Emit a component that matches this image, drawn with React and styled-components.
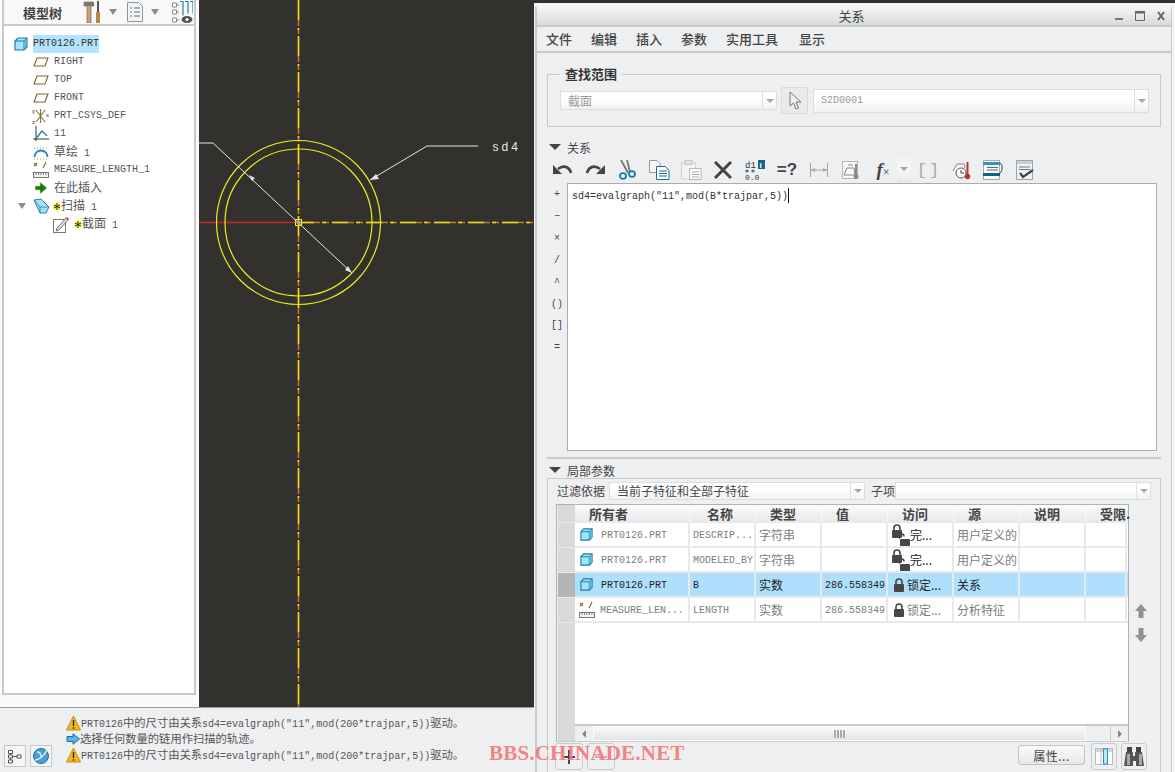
import React from 'react';
import styled, { createGlobalStyle } from 'styled-components';

const Global = createGlobalStyle`
  html, body { margin: 0; padding: 0; background: #eeeff1; }
  body { font-family: "Noto Sans CJK SC", "Liberation Sans", sans-serif; }
  * { box-sizing: border-box; }
`;

const Page = styled.div`
  position: relative;
  display: flex;
  width: 1175px;
  height: 772px;
  overflow: hidden;
  background: #eeeff1;
`;

const Main = styled.div`
  width: 534px;
  display: flex;
  flex-direction: column;
`;

const Top = styled.div`
  display: flex;
  height: 707px;
`;

const TreeColumn = styled.div`
  width: 199px;
  background: #fafafa;
  padding: 0 3px 12px 2px;
`;

const TreePanel = styled.div`
  height: 100%;
  background: #fff;
  border: 2px solid #c6cacc;
  border-top: none;
`;

const TreeHeader = styled.div`
  display: flex;
  align-items: center;
  height: 26px;
  padding-left: 19px;
  background: #f8f8f8;
  border-bottom: 2px solid #c6cacc;
`;

const TreeTitle = styled.div`
  width: 60px;
  font-size: 13px;
  font-weight: 700;
  color: #444;
`;

const HeadIcon = styled.span`
  display: flex;
  flex: none;
  margin-right: ${({ $gap }) => $gap || 0}px;
`;

const TreeBody = styled.div`
  padding-top: 9px;
`;

const TreeRow = styled.div`
  display: flex;
  align-items: center;
  height: 18px;
  padding-left: ${({ $indent }) => $indent}px;
`;

const IconSlot = styled.span`
  display: flex;
  justify-content: center;
  align-items: center;
  flex: none;
  width: ${({ $w }) => $w || 20}px;
  margin-right: ${({ $gap }) => $gap ?? 1}px;
`;

const Mono = styled.span`
  font-family: "Liberation Mono", "Noto Sans CJK SC", monospace;
  font-size: 10px;
  line-height: 12px;
  color: ${({ $color }) => $color || '#555'};
  white-space: nowrap;
`;

const CellMono = styled(Mono)`
  margin-top: 2px;
`;

const Han = styled.span`
  font-family: "Noto Sans CJK SC", sans-serif;
  font-size: 12px;
  line-height: 12px;
`;

const Picked = styled(Mono)`
  display: flex;
  align-items: center;
  height: 18px;
  padding: 0;
  background: #b3e3ff;
  color: #333;
`;

const Canvas = styled.div`
  flex: 1;
  background: #33312d;
  svg { display: block; }
`;

const MessageBar = styled.div`
  flex: 1;
  display: flex;
  border-top: 1px solid #9a9a9a;
  padding: 7px 0 0 4px;
`;

const SideTools = styled.div`
  display: flex;
  align-items: flex-end;
  gap: 4px;
  width: 62px;
  padding: 0 0 5px;
`;

const SideButton = styled.div`
  display: flex;
  align-items: center;
  justify-content: center;
  width: 22px;
  height: 22px;
  border: 1px solid #c6cacc;
  background: #f4f5f6;
`;

const Messages = styled.div`
  display: flex;
  flex-direction: column;
`;

const MessageLine = styled.div`
  display: flex;
  align-items: center;
  height: 16px;
  ${Han} { font-size: 11.3px; }
`;

const Dialog = styled.div`
  width: 641px;
  background: #f3f4f6;
  overflow: hidden;
  display: flex;
  flex-direction: column;
`;

const DarkStrip = styled.div`
  flex: none;
  height: 3px;
  background: #33312d;
`;

const Frame = styled.div`
  flex: 1;
  margin: 4px 3px 0 1px;
  border-left: 2px solid #c6cacc;
  border-right: 1px solid #c6cacc;
  background: #eeeff1;
  display: flex;
  flex-direction: column;
`;

const TitleBar = styled.div`
  position: relative;
  flex: none;
  height: 20px;
  display: flex;
  align-items: center;
  justify-content: center;
  background: linear-gradient(#f4f5f5, #d8dadc);
  border-bottom: 2px solid #c6cacc;
  font-size: 13px;
  color: #444;
  padding: 0 5px 1px 0;
`;

const WinButtons = styled.div`
  position: absolute;
  right: 6px;
  top: 3px;
  display: flex;
  align-items: center;
  gap: 12px;
`;

const MenuBar = styled.div`
  flex: none;
  display: flex;
  align-items: center;
  gap: 19px;
  height: 26px;
  padding: 0 0 2px 9px;
  border-bottom: 2px solid #c6cacc;
  font-size: 13px;
  font-weight: 500;
  color: #444;
  span:last-child { margin-left: 2px; }
`;

const Body = styled.div`
  flex: 1;
  padding: 21px 10px 0 10px;
  display: flex;
  flex-direction: column;
`;

const Group = styled.div`
  position: relative;
  flex: none;
  height: 53px;
  border: 1px solid #c6cacc;
  display: flex;
  align-items: center;
  padding-left: 12px;
`;

const Legend = styled.div`
  position: absolute;
  left: 12px;
  top: -9px;
  padding: 0 5px;
  background: #eeeff1;
  font-size: 13px;
  font-weight: 700;
  line-height: 16px;
  color: #333;
`;

const Combo = styled.div`
  display: flex;
  flex: none;
  width: ${({ $w }) => $w}px;
  height: ${({ $h }) => $h}px;
  border: 1px solid #dcdee0;
  background: linear-gradient(#fff 40%, #f0f1f2);
  font-size: 12px;
  color: ${({ $color }) => $color || '#9a9a9a'};
`;

const ComboText = styled.div`
  flex: 1;
  display: flex;
  align-items: center;
  padding: 0 0 1px ${({ $pad }) => $pad ?? 7}px;
`;

const ComboCaret = styled.div`
  display: flex;
  align-items: center;
  justify-content: center;
  width: ${({ $w }) => $w || 14}px;
  border-left: 1px solid #dcdee0;
  &::after {
    content: '';
    border-left: 4px solid transparent;
    border-right: 4px solid transparent;
    border-top: 4px solid #a4a6a8;
  }
`;

const PickButton = styled.div`
  flex: none;
  display: flex;
  align-items: center;
  justify-content: center;
  width: 27px;
  height: 27px;
  margin: 0 5px 0 4px;
  border: 1px solid #d8dadc;
  border-radius: 2px;
  background: #e9eaec;
`;

const SectionHead = styled.div`
  flex: none;
  display: flex;
  align-items: center;
  gap: 6px;
  height: 16px;
  margin-top: ${({ $top }) => $top}px;
  padding-left: 2px;
  font-size: 12px;
  color: #444;
  &::before {
    content: '';
    border-left: 6px solid transparent;
    border-right: 6px solid transparent;
    border-top: 6px solid #444;
  }
`;

const ToolBar = styled.div`
  flex: none;
  display: flex;
  align-items: center;
  height: 26px;
  margin-top: 2px;
`;

const Tool = styled.div`
  display: flex;
  align-items: center;
  justify-content: center;
  width: 32px;
  height: 26px;
`;

const ToolCaret = styled(ComboCaret)`
  align-self: flex-end;
  width: 14px;
  height: 28px;
  margin: 0 2px 0 -2px;
  border: none;
  background: linear-gradient(#eeeff1, #f9f9fa 50%, #e4e5e7);
`;

const ToolGlyph = styled.span`
  font-family: "Liberation Sans", sans-serif;
  font-size: 17px;
  font-weight: 700;
  color: #444;
`;

const FxGlyph = styled.span`
  font-family: "Liberation Serif", serif;
  font-style: italic;
  font-size: 19px;
  font-weight: 700;
  color: #444;
  span { font-size: 12px; font-style: normal; font-weight: 400; }
`;

const BracketGlyph = styled.span`
  font-family: "Liberation Mono", monospace;
  font-size: 17px;
  letter-spacing: 2px;
  color: #a8aaac;
`;

const EditorRow = styled.div`
  flex: none;
  display: flex;
  height: 268px;
`;

const SymbolColumn = styled.div`
  flex: none;
  width: 20px;
  margin-top: 1px;
  display: flex;
  flex-direction: column;
`;

const SymbolKey = styled.div`
  height: 21.85px;
  display: flex;
  align-items: center;
  justify-content: center;
  font-family: "Liberation Mono", monospace;
  font-size: 10px;
  color: #444;
`;

const Editor = styled.div`
  width: 590px;
  height: 268px;
  background: #fff;
  border: 1px solid #a9abad;
  padding: 3px 4px;
  font-size: 10px;
  line-height: 16px;
`;

const Cursor = styled.span`
  display: inline-block;
  width: 1px;
  height: 15px;
  background: #111;
  vertical-align: -4px;
`;

const Rule = styled.div`
  flex: none;
  height: 2px;
  margin-top: 6px;
  background: #c6cacc;
`;

const ParamBox = styled.div`
  flex: none;
  height: 300px;
  border: 1px solid #c6cacc;
  padding: 3px 0 0 8px;
`;

const FilterRow = styled.div`
  display: flex;
  align-items: center;
  height: 18px;
  margin-bottom: 4px;
  font-size: 12px;
  color: #444;
`;

const FilterLabel = styled.div`
  flex: none;
  width: ${({ $w }) => $w}px;
  padding: 0 0 1px ${({ $pad }) => $pad}px;
`;

const TableRow = styled.div`
  display: flex;
`;

const Table = styled.div`
  width: 573px;
  height: 238px;
  border: 1px solid #b0b3b5;
  border-bottom-color: #c6cacc;
  display: flex;
  background: #fff;
`;

const Gutter = styled.div`
  flex: none;
  width: 18px;
  background: #d9d9d9;
  border-left: 1px solid #eeeff1;
`;

const GutterCell = styled.div`
  height: ${({ $h }) => $h}px;
  background: ${({ $on }) => ($on ? '#b5b5b5' : 'transparent')};
  border-bottom: 1px solid #e9eaeb;
`;

const TableMain = styled.div`
  flex: 1;
  min-width: 0;
  display: flex;
  flex-direction: column;
`;

const HeadRow = styled.div`
  flex: none;
  display: flex;
  height: 18px;
  background: linear-gradient(#fbfbfb, #e6e7e9);
`;

const HeadCell = styled.div`
  flex: none;
  width: ${({ $w }) => $w}px;
  padding-left: ${({ $pad }) => $pad ?? 14}px;
  white-space: nowrap;
  border-right: 1px solid #f8f8f8;
  font-size: 13px;
  line-height: 18px;
  font-weight: 700;
  color: #444;
`;

const DataRow = styled.div`
  flex: none;
  display: flex;
  height: 25px;
  background: ${({ $on }) => ($on ? '#aee0fd' : '#fff')};
  border-bottom: 2px solid #e8e9ea;
`;

const DataCell = styled.div`
  flex: none;
  display: flex;
  align-items: center;
  width: ${({ $w }) => $w}px;
  padding-left: ${({ $pad }) => $pad ?? 3}px;
  overflow: hidden;
  white-space: nowrap;
  border-right: 2px solid #e8e9ea;
  font-size: 12px;
  color: ${({ $on }) => ($on ? '#222' : '#7d7d7d')};
`;

const Spacer = styled.div`
  flex: 1;
`;

const ScrollBar = styled.div`
  flex: none;
  display: flex;
  height: 17px;
  border-top: 2px solid #c6cacc;
  background: #eeeff1;
`;

const ScrollEnd = styled.div`
  flex: none;
  display: flex;
  align-items: center;
  justify-content: center;
  width: ${({ $w }) => $w}px;
  background: #eeeff1;
  &::after {
    content: '';
    border-top: 4px solid transparent;
    border-bottom: 4px solid transparent;
    ${({ $dir }) => ($dir === 'left' ? 'border-right: 4px solid #888;' : 'border-left: 4px solid #888;')}
  }
`;

const ScrollThumb = styled.div`
  flex: none;
  width: 493px;
  margin: 0 1px;
  display: flex;
  align-items: center;
  justify-content: center;
  gap: 1px;
  border: 1px solid #fff;
  background: linear-gradient(#fafafa, #e3e4e6);
  i { width: 2px; height: 8px; background: #aaa; }
`;

const ScrollGap = styled.div`
  flex: 1;
  border-right: 1px solid #c6cacc;
`;

const ArrowColumn = styled.div`
  flex: none;
  width: 25px;
  padding: 100px 0 0 6px;
  display: flex;
  flex-direction: column;
  gap: 10px;
`;

const BottomRow = styled.div`
  display: flex;
  align-items: flex-start;
  margin: 1px 0 0 -1px;
`;

const SquareButton = styled.div`
  flex: none;
  display: flex;
  align-items: center;
  justify-content: center;
  width: ${({ $w }) => $w || 28}px;
  height: 27px;
  margin-right: 4px;
  border: 1px solid #c8cacc;
  border-radius: 3px;
  background: #eeeff1;
`;

const TextButton = styled.div`
  flex: none;
  width: 67px;
  height: 20px;
  margin: 2px 6px 0 399px;
  display: flex;
  align-items: center;
  justify-content: center;
  border: 1px solid #c0c2c4;
  border-radius: 3px;
  background: linear-gradient(#fbfbfb, #e6e7e9);
  font-size: 12px;
  color: #444;
  letter-spacing: 0.5px;
`;

const Watermark = styled.div`
  position: absolute;
  left: 489px;
  top: 740px;
  font-family: "Liberation Serif", serif;
  font-size: 21px;
  font-weight: 700;
  line-height: 26px;
  letter-spacing: 0.2px;
  color: #f7797d;
  white-space: nowrap;
  opacity: 0.92;
`;

/* tree and table icons */
const PartIcon = ({ size = 14 }) => (
  <svg width={size} height={size} viewBox="0 0 14 14">
    <path d="M1 4 4 1h9v9l-3 3H1z" fill="#a5e3f8" stroke="#1b7ca6" strokeWidth="1.2" />
    <path d="M1 4h9v9M10 4l3-3" fill="none" stroke="#1b7ca6" strokeWidth="1" />
    <path d="M10 4.500l2.500-2.500v7.500L10 12z" fill="#5fb8da" />
  </svg>
);

const PlaneIcon = () => (
  <svg width="16" height="10" viewBox="0 0 16 10">
    <path d="M4 1h11l-3 8H1z" fill="none" stroke="#7c6331" strokeWidth="1.1" />
  </svg>
);

const CsysIcon = () => (
  <svg width="18" height="18" viewBox="0 0 18 18">
    <path d="M4 3l9 12M13 3 4 15M8.500 2v14" stroke="#8a7240" strokeWidth="1.1" fill="none" />
    <text x="0" y="6" fontSize="6" fontFamily="Liberation Sans" fill="#333">y</text>
    <text x="0" y="17" fontSize="6" fontFamily="Liberation Sans" fill="#333">z</text>
    <text x="14" y="10" fontSize="6" fontFamily="Liberation Sans" fill="#333">x</text>
  </svg>
);

const GraphIcon = () => (
  <svg width="16" height="16" viewBox="0 0 16 16">
    <path d="M3 0v15M0 13h16" stroke="#333" strokeWidth="1" fill="none" />
    <path d="M3.500 12 9 5l5 5" stroke="#2a7fa8" strokeWidth="1.4" fill="none" />
  </svg>
);

const SketchIcon = () => (
  <svg width="16" height="16" viewBox="0 0 16 16">
    <path d="M1.500 13a6.500 6.500 0 0 1 13 0" stroke="#2a86b4" strokeWidth="1.8" fill="none" />
    <path d="M1 4h14M1 15h14" stroke="#777" strokeWidth="0.8" strokeDasharray="1 2" fill="none" />
  </svg>
);

const MeasureIcon = () => (
  <svg width="16" height="18" viewBox="0 0 16 18">
    <path d="M1 2l3 3M4 2 1 5M13 1l-3 6" stroke="#8a6d3b" strokeWidth="1.2" fill="none" />
    <rect x="0.500" y="11.500" width="15" height="5" fill="#f4f4f4" stroke="#777" />
    <path d="M3 12v2M5.500 12v2M8 12v2M10.500 12v2M13 12v2" stroke="#666" strokeWidth="0.8" />
  </svg>
);

const InsertIcon = () => (
  <svg width="12" height="12" viewBox="0 0 12 12">
    <path d="M0 4h5V0l7 6-7 6V8H0z" fill="#0d7a1d" stroke="#e3e36a" strokeWidth="0.6" />
  </svg>
);

const SweepIcon = () => (
  <svg width="17" height="16" viewBox="0 0 17 16">
    <path d="M1 2l7-1 8 8-3 6H7z" fill="#a7dcf2" stroke="#2a7fa8" strokeWidth="1" />
    <path d="M1 2l6 7 9 0M7 9v6" stroke="#2a7fa8" strokeWidth="0.8" fill="none" />
  </svg>
);

const PencilIcon = () => (
  <svg width="17" height="17" viewBox="0 0 17 17">
    <rect x="0.500" y="3.500" width="12" height="13" fill="#fff" stroke="#777" />
    <path d="M4 12 13 2l2 2-9 10-3 1z" fill="#ddd" stroke="#555" strokeWidth="0.8" />
    <path d="M13 2l1-1 2 2-1 1z" fill="#c33" />
  </svg>
);

const StarMark = () => (
  <svg width="8" height="9" viewBox="0 0 8 9">
    <circle cx="4" cy="4.500" r="3.800" fill="#ffff30" />
    <path d="M4 1v7M1 3l6 3M7 3 1 6" stroke="#222" strokeWidth="1" />
  </svg>
);

const TriangleDown = ({ color = '#8c8c8c' }) => (
  <svg width="8" height="6" viewBox="0 0 8 6">
    <path d="M0 0h8L4 6z" fill={color} />
  </svg>
);

const HammerIcon = () => (
  <svg width="18" height="22" viewBox="0 0 18 22">
    <path d="M1 1h9l1 4H8v17H4V5H1z" fill="#c8a468" stroke="#6e5630" strokeWidth="0.6" />
    <path d="M1 1h10v4H1z" fill="#777" />
    <path d="M14 0h2v11h-2z" fill="#555" />
    <path d="M13 11h4v11h-4z" fill="#b58a48" />
  </svg>
);

const ListDocIcon = () => (
  <svg width="16" height="20" viewBox="0 0 16 20">
    <path d="M.5.5h11l4 4v15H.5z" fill="#f2f4f5" stroke="#8e9498" />
    <path d="M7 6h6M7 10h6M7 14h6" stroke="#666" strokeWidth="1" />
    <path d="M3 6h2M3 10h2M3 14h2" stroke="#2a86b4" strokeWidth="1.2" />
  </svg>
);

const TreeEyeIcon = () => (
  <svg width="21" height="23" viewBox="0 0 21 23">
    <path d="M.5 2h4v4h-4zM.5 9h4v4h-4zM.5 17h4v4h-4z" fill="#fff" stroke="#888" />
    <path d="M4 4h3M4 11h3M4 19h3" stroke="#888" />
    <path d="M8 .5h3v14M13 .5h3v12M18 .5h3v12" stroke="#2a7fa8" strokeWidth="1.2" fill="none" />
    <ellipse cx="15" cy="18.500" rx="5.500" ry="3.500" fill="#555" />
    <circle cx="15" cy="18.500" r="1.500" fill="#fff" />
  </svg>
);

const WarnIcon = () => (
  <svg width="15" height="16" viewBox="0 0 15 16">
    <path d="M7.500 1 14.500 15H.5z" fill="#f5b90f" stroke="#b37a05" strokeWidth="0.8" />
    <path d="M7.500 5v6M7.500 12.200v1.600" stroke="#222" strokeWidth="1.400" />
  </svg>
);

const BlueArrowIcon = () => (
  <svg width="14" height="12" viewBox="0 0 14 12">
    <path d="M1 3.500h6V.8L13.500 6 7 11.200V8.500H1z" fill="#52b7e6" stroke="#14678f" strokeWidth="0.9" />
  </svg>
);

const OrgIcon = () => (
  <svg width="14" height="15" viewBox="0 0 14 15">
    <path d="M.5 1.500h4v3h-4zM.5 6h4v3h-4zM.5 11h4v3h-4zM9 6h4v3H9z" fill="#fff" stroke="#555" />
    <path d="M2.500 4.500v1.500M2.500 9v2M4.500 7.500H9" stroke="#555" />
  </svg>
);

const GlobeIcon = () => (
  <svg width="18" height="18" viewBox="0 0 18 18">
    <circle cx="9" cy="9" r="7.500" fill="#4a9fd0" stroke="#1b6f9c" />
    <path d="M3 13c4 0 9-4 12-10M5 5c3 0 4 2 4 5" stroke="#dff3fb" strokeWidth="1.400" fill="none" />
  </svg>
);

const CursorIcon = () => (
  <svg width="14" height="20" viewBox="0 0 14 20">
    <path d="M2 1v14l3.500-3 2.500 6 2.500-1-2.500-6H13z" fill="#eee" stroke="#777" />
  </svg>
);

/* dialog toolbar icons */
const UndoIcon = () => (
  <svg width="20" height="14" viewBox="0 0 20 14">
    <path d="M5 6c5-4 11-3 13 4" fill="none" stroke="#444" strokeWidth="2.600" />
    <path d="M0 2v9h9z" fill="#444" />
  </svg>
);

const RedoIcon = () => (
  <svg width="20" height="14" viewBox="0 0 20 14">
    <path d="M15 6C10 2 4 3 2 10" fill="none" stroke="#444" strokeWidth="2.600" />
    <path d="M20 2v9h-9z" fill="#444" />
  </svg>
);

const CutIcon = () => (
  <svg width="17" height="20" viewBox="0 0 17 20">
    <path d="M2 0l7 13M8 0l2 8 1 4" stroke="#777" strokeWidth="1.800" fill="none" />
    <ellipse cx="4" cy="16" rx="3" ry="2.800" fill="none" stroke="#157cab" strokeWidth="1.800" />
    <ellipse cx="13" cy="14" rx="3" ry="2.800" fill="none" stroke="#157cab" strokeWidth="1.800" />
  </svg>
);

const CopyIcon = () => (
  <svg width="21" height="20" viewBox="0 0 21 20">
    <path d="M.5.5H8l3 3v9H.5z" fill="#f7f7f7" stroke="#999" />
    <path d="M7.500 6.500H16l4 3.500v9.500H7.500z" fill="#fff" stroke="#1a6c94" />
    <path d="M10 11h8M10 13.500h8M10 16h8" stroke="#1a6c94" />
  </svg>
);

const PasteIcon = () => (
  <svg width="21" height="20" viewBox="0 0 21 20">
    <rect x="0.500" y="3" width="14" height="16" fill="#f2f3f4" stroke="#cfd0d2" />
    <rect x="4" y="0.500" width="7" height="4" fill="#e2e3e4" stroke="#c4c5c7" />
    <path d="M8.500 8.500H20v11H8.500z" fill="#fff" stroke="#b5b6b8" />
    <path d="M11 12h7M11 14.500h7M11 17h7" stroke="#a8a9ab" />
  </svg>
);

const CrossIcon = () => (
  <svg width="18" height="18" viewBox="0 0 18 18">
    <path d="M1 1l16 16M17 1 1 17" stroke="#444" strokeWidth="3" />
  </svg>
);

const DecimalIcon = () => (
  <svg width="21" height="20" viewBox="0 0 21 20">
    <text x="0" y="8" fontSize="9" fontFamily="Liberation Mono" fill="#333">d1</text>
    <rect x="13" y="0" width="7" height="9" fill="#1a6488" />
    <text x="14.500" y="7.500" fontSize="8" fontWeight="700" fontFamily="Liberation Sans" fill="#fff">i</text>
    <path d="M0 11h4M2 9.500v3M6 11h4M8 9.500v3" stroke="#1a6488" strokeWidth="1.200" />
    <text x="0" y="19.500" fontSize="8" fontFamily="Liberation Mono" fill="#333">0.0</text>
  </svg>
);

const DimIcon = () => (
  <svg width="18" height="14" viewBox="0 0 18 14">
    <path d="M.5 0v14M17.500 0v14M1 7h16" stroke="#a5a7a9" fill="none" />
    <path d="M1 7l4-2v4zM17 7l-4-2v4z" fill="#a5a7a9" />
  </svg>
);

const MeasureDocIcon = () => (
  <svg width="18" height="19" viewBox="0 0 18 19">
    <rect x="0.500" y="0.500" width="15" height="17" fill="#f8f8f8" stroke="#b3b5b7" />
    <path d="M2 14l3-7h7l1 7zM6 4h5" fill="none" stroke="#888" />
    <path d="M14 3v11" stroke="#888" strokeWidth="2" />
    <circle cx="14" cy="15.500" r="2.500" fill="#888" />
  </svg>
);

const ThermoIcon = () => (
  <svg width="19" height="19" viewBox="0 0 19 19">
    <path d="M1 10l4-7h7l1 4" fill="#f4f4f4" stroke="#888" />
    <circle cx="9" cy="12" r="5" fill="#fff" stroke="#555" />
    <path d="M9 9v3h3" stroke="#333" fill="none" />
    <path d="M15.500 1v13" stroke="#b5362e" strokeWidth="2" />
    <circle cx="15.500" cy="15.500" r="2.700" fill="#b5362e" />
  </svg>
);

const ListSwapIcon = () => (
  <svg width="21" height="20" viewBox="0 0 21 20">
    <rect x="0.500" y="0.500" width="16" height="19" fill="#f8f8f8" stroke="#aaa" />
    <path d="M0 2h17v3H0z" fill="#2796c9" />
    <path d="M0 13h17v3H0z" fill="#125f86" />
    <path d="M4 7.500h11M4 10h11" stroke="#666" />
    <path d="M17 3c3 1 3 9-1 11" stroke="#444" fill="none" />
  </svg>
);

const CheckDocIcon = () => (
  <svg width="18" height="20" viewBox="0 0 18 20">
    <rect x="0.500" y="0.500" width="16" height="19" fill="#f1f2f3" stroke="#9ba5ab" />
    <path d="M1 1h15v3H1z" fill="#c4d2da" />
    <path d="M3 7h11M3 9.500h11" stroke="#777" />
    <path d="M4 13l3 4 10-7" fill="none" stroke="#444" strokeWidth="2.200" />
  </svg>
);

const LockIcon = ({ open }) => (
  <svg width="12" height="14" viewBox="0 0 12 14">
    <path
      d={open ? 'M1 6V3.500a2.500 2.500 0 0 1 5 0' : 'M3 6V4a3 3 0 0 1 6 0v2'}
      fill="none"
      stroke="#444"
      strokeWidth="1.600"
      transform={open ? 'translate(-1 0)' : undefined}
    />
    <rect x="1" y="6" width="10" height="8" rx="1" fill="#474747" />
  </svg>
);

const UpArrowIcon = () => (
  <svg width="12" height="14" viewBox="0 0 12 14">
    <path d="M6 0l6 7H8.500v7h-5V7H0z" fill="#8f9193" />
  </svg>
);

const DownArrowIcon = () => (
  <svg width="12" height="14" viewBox="0 0 12 14">
    <path d="M6 14l6-7H8.500V0h-5v7H0z" fill="#8f9193" />
  </svg>
);

const ColumnsIcon = () => (
  <svg width="18" height="17" viewBox="0 0 18 17">
    <rect x="0.500" y="0.500" width="17" height="16" fill="#fff" stroke="#bbb" />
    <path d="M1 1h16v3H1z" fill="#d7d8da" />
    <path d="M6 1v15M12 1v15" stroke="#bbb" />
    <rect x="8.500" y="1" width="4" height="15" fill="#bfe6f7" stroke="#1e93c6" />
  </svg>
);

const BinocularsIcon = () => (
  <svg width="20" height="22" viewBox="0 0 20 22">
    <path d="M3 1h5v5H3zM12 1h5v5h-5z" fill="#444" />
    <path d="M2 6h7v4h2V6h7l2 14h-8v-5H9v5H0z" fill="#555" />
    <path d="M3 8h3v11H3zM15 8h3v11h-3z" fill="#a8a8a8" />
  </svg>
);

const PlusIcon = () => (
  <svg width="12" height="14" viewBox="0 0 12 14">
    <path d="M5 0h2v6h5v2H7v6H5V8H0V6h5z" fill="#444" />
  </svg>
);

const MinusIcon = () => (
  <svg width="12" height="14" viewBox="0 0 12 14">
    <path d="M0 6h12v2H0z" fill="#b5b5b5" />
  </svg>
);

const DrawingView = () => (
  <svg width="335" height="707" viewBox="199 0 335 707">
    <line x1="298.500" y1="0" x2="298.500" y2="707" stroke="#c87a20" strokeWidth="1.500" strokeDasharray="26 2 6 2" />
    <line x1="298.500" y1="0" x2="298.500" y2="707" stroke="#e6e01e" strokeWidth="1.500" strokeDasharray="20 8 2 6" />
    <line x1="199" y1="222.500" x2="298" y2="222.500" stroke="#c9252f" strokeWidth="1.500" />
    <line x1="298" y1="222.500" x2="534" y2="222.500" stroke="#c87a20" strokeWidth="1.500" strokeDasharray="22 3 6 3" />
    <line x1="298" y1="222.500" x2="534" y2="222.500" stroke="#dfdc24" strokeWidth="1.500" strokeDasharray="16 8 4 6" />
    <circle cx="298.500" cy="222.500" r="82" fill="none" stroke="#ecec1c" strokeWidth="1.200" />
    <circle cx="298.500" cy="222.500" r="73.500" fill="none" stroke="#ecec1c" strokeWidth="1.200" />
    <path d="M199 143h14l138.500 129.500" fill="none" stroke="#e6e6e6" strokeWidth="1" />
    <path d="M370 180 427 146h51" fill="none" stroke="#e6e6e6" strokeWidth="1" />
    <path d="M249 175l6 3-3 3z" fill="#e6e6e6" />
    <path d="M352 273l-7-3 3-4z" fill="#e6e6e6" />
    <path d="M370 180l6-6 3 5z" fill="#e6e6e6" />
    <rect x="295.500" y="219.500" width="6" height="6" fill="none" stroke="#ecec1c" />
    <circle cx="298.500" cy="222.500" r="2" fill="#9aa7c8" />
    <text x="492.500" y="150.500" fontFamily="Liberation Sans" fontSize="12" letterSpacing="3" fill="#e8e8e8">sd4</text>
  </svg>
);

const treeRows = [
  { label: 'RIGHT', icon: <PlaneIcon /> },
  { label: 'TOP', icon: <PlaneIcon /> },
  { label: 'FRONT', icon: <PlaneIcon /> },
  { label: 'PRT_CSYS_DEF', icon: <CsysIcon /> },
  { label: '11', icon: <GraphIcon /> },
  { label: <><Han>草绘</Han> 1</>, icon: <SketchIcon /> },
  { label: 'MEASURE_LENGTH_1', icon: <MeasureIcon /> },
  { label: <Han>在此插入</Han>, icon: <InsertIcon /> },
];

const tools = [
  <UndoIcon />, <RedoIcon />, <CutIcon />, <CopyIcon />, <PasteIcon />, <CrossIcon />,
  <DecimalIcon />, <ToolGlyph>=?</ToolGlyph>, <DimIcon />, <MeasureDocIcon />,
];

const symbols = ['+', '−', '×', '/', '^', '()', '[]', '='];

const columns = [
  { name: '所有者', w: 115 },
  { name: '名称', w: 66, pad: 17 },
  { name: '类型', w: 66 },
  { name: '值', w: 66 },
  { name: '访问', w: 66 },
  { name: '源', w: 66 },
  { name: '说明', w: 66 },
  { name: '受限.', w: 41 },
];

const params = [
  { icon: <PartIcon size={13} />, owner: 'PRT0126.PRT', name: 'DESCRIP...', type: '字符串', value: '', access: '完...', twoLocks: true, source: '用户定义的' },
  { icon: <PartIcon size={13} />, owner: 'PRT0126.PRT', name: 'MODELED_BY', type: '字符串', value: '', access: '完...', twoLocks: true, source: '用户定义的' },
  { icon: <PartIcon size={13} />, owner: 'PRT0126.PRT', name: 'B', type: '实数', value: '286.558349', access: '锁定...', source: '关系', on: true },
  { icon: <MeasureIcon />, owner: 'MEASURE_LEN...', name: 'LENGTH', type: '实数', value: '286.558349', access: '锁定...', source: '分析特征', measure: true },
];

const warning = <>PRT0126<Han>中的尺寸由关系</Han>sd4=evalgraph("11",mod(200*trajpar,5))<Han>驱动。</Han></>;

const LockPair = styled.span`
  position: relative;
  flex: none;
  width: 19px;
  height: 24px;
  svg { position: absolute; left: 0; top: 1px; }
  svg + svg { left: 8px; top: 10px; }
`;

const LockSlot = styled.span`
  flex: none;
  display: flex;
  margin: 0 2px 0 3px;
`;

const ParamRow = ({ row }) => (
  <DataRow $on={row.on}>
    <DataCell $w={115} $pad={row.measure ? 4 : 5} $on={row.on}>
      <IconSlot $w={row.measure ? 16 : 13} $gap={row.measure ? 5 : 8}>{row.icon}</IconSlot>
      <CellMono $color={row.on ? '#222' : '#7d7d7d'}>{row.owner}</CellMono>
    </DataCell>
    <DataCell $w={66} $on={row.on}><CellMono $color={row.on ? '#222' : '#7d7d7d'}>{row.name}</CellMono></DataCell>
    <DataCell $w={66} $on={row.on}>{row.type}</DataCell>
    <DataCell $w={66} $on={row.on}><CellMono $color={row.on ? '#222' : '#7d7d7d'}>{row.value}</CellMono></DataCell>
    <DataCell $w={66} $pad={row.twoLocks ? 3 : 2} $on={row.twoLocks || row.on}>
      {row.twoLocks
        ? <LockPair><LockIcon open={false} /><LockIcon open /></LockPair>
        : <LockSlot><LockIcon /></LockSlot>}
      {row.access}
    </DataCell>
    <DataCell $w={66} $on={row.on}>{row.source}</DataCell>
    <DataCell $w={66} />
    <DataCell $w={41} />
  </DataRow>
);

const App = () => (
  <Page>
    <Global />
    <Main>
      <Top>
        <TreeColumn>
          <TreePanel>
            <TreeHeader>
              <TreeTitle>模型树</TreeTitle>
              <HeadIcon $gap={8}><HammerIcon /></HeadIcon>
              <HeadIcon $gap={10}><TriangleDown /></HeadIcon>
              <HeadIcon $gap={8}><ListDocIcon /></HeadIcon>
              <HeadIcon $gap={13}><TriangleDown /></HeadIcon>
              <HeadIcon><TreeEyeIcon /></HeadIcon>
            </TreeHeader>
            <TreeBody>
              <TreeRow $indent={10}>
                <IconSlot $w={14} $gap={5}><PartIcon /></IconSlot>
                <Picked>PRT0126.PRT</Picked>
              </TreeRow>
              {treeRows.map((row, index) => (
                <TreeRow $indent={28} key={index}>
                  <IconSlot $w={18} $gap={4}>{row.icon}</IconSlot>
                  <Mono>{row.label}</Mono>
                </TreeRow>
              ))}
              <TreeRow $indent={13}>
                <IconSlot $w={9} $gap={7}><TriangleDown /></IconSlot>
                <IconSlot $w={17} $gap={3}><SweepIcon /></IconSlot>
                <StarMark />
                <Mono><Han>扫描</Han> 1</Mono>
              </TreeRow>
              <TreeRow $indent={49}>
                <IconSlot $w={17} $gap={4}><PencilIcon /></IconSlot>
                <StarMark />
                <Mono><Han>截面</Han> 1</Mono>
              </TreeRow>
            </TreeBody>
          </TreePanel>
        </TreeColumn>
        <Canvas><DrawingView /></Canvas>
      </Top>
      <MessageBar>
        <SideTools>
          <SideButton><OrgIcon /></SideButton>
          <SideButton><GlobeIcon /></SideButton>
        </SideTools>
        <Messages>
          <MessageLine><IconSlot $w={15} $gap={0}><WarnIcon /></IconSlot><Mono>{warning}</Mono></MessageLine>
          <MessageLine><IconSlot $w={14} $gap={0}><BlueArrowIcon /></IconSlot><Mono><Han>选择任何数量的链用作扫描的轨迹。</Han></Mono></MessageLine>
          <MessageLine><IconSlot $w={15} $gap={0}><WarnIcon /></IconSlot><Mono>{warning}</Mono></MessageLine>
        </Messages>
      </MessageBar>
    </Main>
    <Dialog>
      <DarkStrip />
      <Frame>
        <TitleBar>
          关系
          <WinButtons>
            <svg width="8" height="12" viewBox="0 0 8 12"><path d="M0 8h8v2H0z" fill="#777" /></svg>
            <svg width="10" height="10" viewBox="0 0 10 10"><path d="M.5 .5h9v9h-9z" fill="none" stroke="#666" /><path d="M0 0h10v2.500H0z" fill="#666" /></svg>
            <svg width="8" height="10" viewBox="0 0 8 10"><path d="M1 1l6 8M7 1 1 9" stroke="#666" strokeWidth="2" /></svg>
          </WinButtons>
        </TitleBar>
        <MenuBar>
          <span>文件</span><span>编辑</span><span>插入</span><span>参数</span><span>实用工具</span><span>显示</span>
        </MenuBar>
        <Body>
          <Group>
            <Legend>查找范围</Legend>
            <Combo $w={217} $h={19}>
              <ComboText>截面</ComboText>
              <ComboCaret />
            </Combo>
            <PickButton><CursorIcon /></PickButton>
            <Combo $w={336} $h={24}>
              <ComboText><CellMono $color="#9a9a9a">S2D0001</CellMono></ComboText>
              <ComboCaret />
            </Combo>
          </Group>
          <SectionHead $top={12}>关系</SectionHead>
          <ToolBar>
            {tools.map((tool, index) => <Tool key={index}>{tool}</Tool>)}
            <Tool><FxGlyph>f<span>×</span></FxGlyph></Tool>
            <ToolCaret />
            <Tool><BracketGlyph>[]</BracketGlyph></Tool>
            <Tool><ThermoIcon /></Tool>
            <Tool><ListSwapIcon /></Tool>
            <Tool><CheckDocIcon /></Tool>
          </ToolBar>
          <EditorRow>
            <SymbolColumn>
              {symbols.map((symbol) => <SymbolKey key={symbol}>{symbol}</SymbolKey>)}
            </SymbolColumn>
            <Editor><Mono $color="#333">sd4=evalgraph("11",mod(B*trajpar,5))</Mono><Cursor /></Editor>
          </EditorRow>
          <Rule />
          <SectionHead $top={3}>局部参数</SectionHead>
          <ParamBox>
            <FilterRow>
              <FilterLabel $w={53} $pad={1}>过滤依据</FilterLabel>
              <Combo $w={256} $h={18} $color="#444">
                <ComboText $pad={7}>当前子特征和全部子特征</ComboText>
                <ComboCaret />
              </Combo>
              <FilterLabel $w={30} $pad={6}>子项</FilterLabel>
              <Combo $w={256} $h={18}>
                <ComboText />
                <ComboCaret />
              </Combo>
            </FilterRow>
            <TableRow>
              <Table>
                <Gutter>
                  <GutterCell $h={18} />
                  <GutterCell $h={25} />
                  <GutterCell $h={25} />
                  <GutterCell $h={25} $on />
                  <GutterCell $h={25} />
                </Gutter>
                <TableMain>
                  <HeadRow>
                    {columns.map((col) => <HeadCell key={col.name} $w={col.w} $pad={col.pad}>{col.name}</HeadCell>)}
                  </HeadRow>
                  {params.map((row, index) => <ParamRow row={row} key={index} />)}
                  <Spacer />
                  <ScrollBar>
                    <ScrollEnd $w={17} $dir="left" />
                    <ScrollThumb><i /><i /><i /><i /></ScrollThumb>
                    <ScrollGap />
                    <ScrollEnd $w={17} $dir="right" />
                  </ScrollBar>
                </TableMain>
              </Table>
              <ArrowColumn>
                <UpArrowIcon />
                <DownArrowIcon />
              </ArrowColumn>
            </TableRow>
            <BottomRow>
              <SquareButton><PlusIcon /></SquareButton>
              <SquareButton><MinusIcon /></SquareButton>
              <TextButton>属性...</TextButton>
              <SquareButton $w={26}><ColumnsIcon /></SquareButton>
              <SquareButton $w={26}><BinocularsIcon /></SquareButton>
            </BottomRow>
          </ParamBox>
        </Body>
      </Frame>
    </Dialog>
    <Watermark>BBS.CHINADE.NET</Watermark>
  </Page>
);

export default App;
